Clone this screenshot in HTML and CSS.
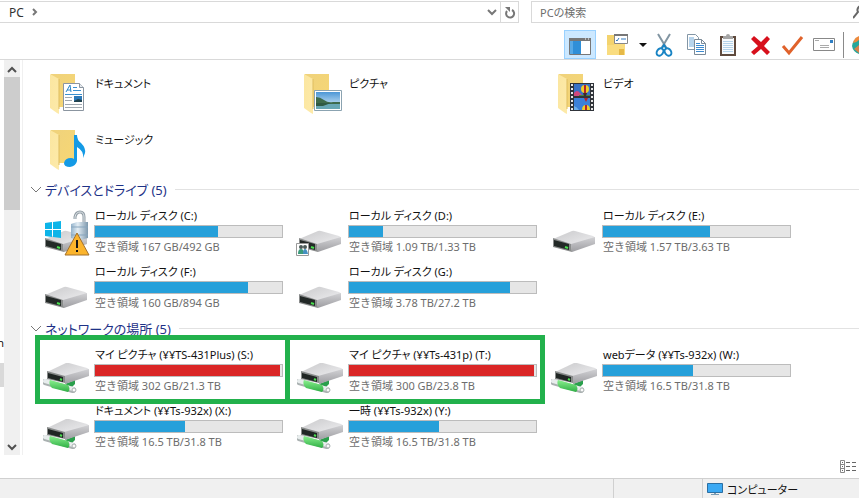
FILE: index.html
```html
<!DOCTYPE html>
<html lang="ja">
<head>
  <meta charset="UTF-8">
  <meta name="viewport" content="width=device-width, initial-scale=1.0">
  <title>PC</title>
  <link rel="stylesheet" href="styles.css">
</head>
<body>
  <!-- Shared icons -->
  <svg class="defs" aria-hidden="true">
    <defs>
      <linearGradient id="folderBack" x1="0" y1="0" x2="1" y2="1">
        <stop offset="0" stop-color="#efd27c"/><stop offset="1" stop-color="#f7d774"/>
      </linearGradient>
      <linearGradient id="folderFlap" x1="0" y1="0" x2="1" y2="1">
        <stop offset="0" stop-color="#fbe6a0"/><stop offset="1" stop-color="#fdeaa9"/>
      </linearGradient>
      <linearGradient id="driveTop" x1="0" y1="0" x2="1" y2="1">
        <stop offset="0" stop-color="#c9c9cb"/><stop offset="1" stop-color="#efeff1"/>
      </linearGradient>
      <linearGradient id="driveSide" x1="0" y1="0" x2="0" y2="1">
        <stop offset="0" stop-color="#d2d2d5"/><stop offset="1" stop-color="#9d9da1"/>
      </linearGradient>
      <linearGradient id="pipe" x1="0" y1="0" x2="0" y2="1">
        <stop offset="0" stop-color="#8af08e"/><stop offset="1" stop-color="#2fae45"/>
      </linearGradient>
      <linearGradient id="sky" x1="0" y1="0" x2="0" y2="1">
        <stop offset="0" stop-color="#4c97d6"/><stop offset="1" stop-color="#e4f3fb"/>
      </linearGradient>
      <linearGradient id="lockBody" x1="0" y1="0" x2="1" y2="0">
        <stop offset="0" stop-color="#93b3cc"/><stop offset=".4" stop-color="#e3edf4"/><stop offset="1" stop-color="#7d98ad"/>
      </linearGradient>
    </defs>
    <symbol id="folder" viewBox="0 0 51 56">
      <path d="M8 10h24v33H9z" fill="url(#folderBack)"/>
      <path d="M7 10l9 5v35l-2-1-7-5z" fill="url(#folderFlap)"/>
      <path d="M16 15v30" stroke="#dfbd5e" stroke-width="1"/>
    </symbol>
    <symbol id="drive" viewBox="0 0 51 56">
      <path d="M2 36l19-8q1-.5 3 0l18 5q2 1 2 2L23 43z" fill="url(#driveTop)"/>
      <path d="M20 41l24-7v7l-23 8z" fill="url(#driveSide)"/>
      <path d="M2 35l18 6 1 8L2 44z" fill="#8a8c8c"/>
      <path d="M3 37l15 4v6L3 43z" fill="#232927"/>
      <path d="M14 44l3 1" stroke="#49e04f" stroke-width="2"/>
    </symbol>
    <symbol id="netdrive" viewBox="0 0 51 56">
      <path d="M22 42l10-4v4l-4 4z" fill="#2a9f4c"/>
      <path d="M2 40l28 8" stroke="#aab1b1" stroke-width="6" stroke-linecap="round"/>
      <path d="M2 39l28 8" stroke="#e8eded" stroke-width="4" stroke-linecap="round"/>
      <path d="M7 38l18 5q3 4 0 7L9 46q-4-4-2-8z" fill="url(#pipe)"/>
      <circle cx="31" cy="48" r="2" fill="#fafafa" stroke="#aab1b1"/>
      <path d="M4 30l19-9h3l18 5q2 1 2 2L24 35z" fill="url(#driveTop)"/>
      <path d="M21 34l25-7v7l-24 8z" fill="url(#driveSide)"/>
      <path d="M4 29l18 5v7L4 37z" fill="#888b8a"/>
      <path d="M5 31l15 4v5L5 36z" fill="#202624"/>
      <path d="M17 37l2 1" stroke="#49e04f" stroke-width="2"/>
    </symbol>
  </svg>

  <header class="nav">
    <div class="address">
      <button type="button" class="crumb">PC
        <svg width="6" height="8" viewBox="0 0 6 8"><path d="M1 1l3 3-3 3" fill="none" stroke="#777" stroke-width="2"/></svg>
      </button>
      <button type="button" class="history" aria-label="履歴">
        <svg width="10" height="7" viewBox="0 0 10 7"><path d="M1 1l4 4 4-4" fill="none" stroke="#777" stroke-width="2"/></svg>
      </button>
      <button type="button" class="refresh" aria-label="更新">
        <svg width="12" height="13" viewBox="0 0 12 13"><path d="M8 4a4 4 0 1 1-5 1" fill="none" stroke="#777" stroke-width="2"/><path d="M1 1h5v5z" fill="#777"/></svg>
      </button>
    </div>
    <div class="search">
      <input type="text" placeholder="PCの検索" aria-label="PCの検索">
      <svg width="6" height="14" viewBox="0 0 6 14"><path d="M8 1a4 4 0 0 0-3 6L0 13" fill="none" stroke="#666" stroke-width="2"/></svg>
    </div>
  </header>

  <div class="toolbar">
    <button type="button" class="tool active" aria-label="ナビゲーション">
      <svg width="24" height="24" viewBox="0 0 24 24"><path d="M1.500 5.500h21v16h-21z" fill="#fff" stroke="#777"/><path d="M1 5h22v3H1z" fill="#777"/><path d="M2 8h11v13H2z" fill="#2f8fd8"/><path d="M17 6h1M20 6h1" stroke="#fff"/><path d="M2 8h3v13H2z" fill="#57a9e6"/></svg>
    </button>
    <button type="button" class="tool folder-tool" aria-label="オプション">
      <svg width="24" height="24" viewBox="0 0 24 24"><path d="M2 2h7l2 9h9v11H2z" fill="#f3d36e"/><path d="M2 12h7l2-3h9v13H2z" fill="#f9dc7f"/><path d="M14 16h5v6h-5z" fill="#e6b948"/><path d="M9.500 1.500h13v9h-13z" fill="#fff" stroke="#888"/><path d="M9 2h14" stroke="#777" stroke-width="2"/><path d="M11 7l1 1 2-3M16 6h5" fill="none" stroke="#3179bd"/></svg>
    </button>
    <button type="button" class="tool drop" aria-label="メニュー">
      <svg width="8" height="4" viewBox="0 0 8 4"><path d="M0 0h8L4 4z" fill="#111"/></svg>
    </button>
    <button type="button" class="tool" aria-label="切り取り">
      <svg width="24" height="24" viewBox="0 0 24 24"><path d="M6 1l9 15M18 1L9 16" stroke="#8295a2" stroke-width="2"/><ellipse cx="8" cy="19" rx="3" ry="4" transform="rotate(35 8 19)" fill="none" stroke="#1984c4" stroke-width="2"/><ellipse cx="16" cy="19" rx="3" ry="4" transform="rotate(-35 16 19)" fill="none" stroke="#1984c4" stroke-width="2"/><path d="M10 15l2-3 2 3" fill="none" stroke="#1984c4" stroke-width="2"/></svg>
    </button>
    <button type="button" class="tool" aria-label="コピー">
      <svg width="24" height="24" viewBox="0 0 24 24"><path d="M3.500 1.500h8l3 3v12h-11z" fill="#fff" stroke="#8396a6"/><path d="M5 5h5M5 7h5M5 9h5M5 11h5M5 13h5" stroke="#6fa9da"/><path d="M10.500 6.500h7l4 4v11h-11z" fill="#fff" stroke="#7b8b99"/><path d="M17.500 6.500v4h4" fill="none" stroke="#7b8b99"/><path d="M12 10.500h4M12 12.500h8M12 14.500h8M12 16.500h8M12 18.500h8" stroke="#3d8bd0"/></svg>
    </button>
    <button type="button" class="tool" aria-label="貼り付け">
      <svg width="24" height="24" viewBox="0 0 24 24"><path d="M4 3h16v20H4z" fill="#5f4a3d"/><path d="M6 5h12v16H6z" fill="#f7fafc"/><path d="M7 8.500h10M7 10.500h10M7 12.500h10M7 14.500h10M7 16.500h10M7 18.500h10" stroke="#b5d3ea"/><path d="M7 3h3q0-2 2-2t2 2h3v3H7z" fill="#a5a5a5"/></svg>
    </button>
    <button type="button" class="tool" aria-label="削除">
      <svg width="24" height="24" viewBox="0 0 24 24"><path d="M6 3l7 6 6-6 3 3-6 7 6 6-3 3-6-6-7 6-3-3 7-6-7-7z" fill="#d7101c"/></svg>
    </button>
    <button type="button" class="tool" aria-label="名前の変更">
      <svg width="24" height="24" viewBox="0 0 24 24"><path d="M3 13l6 7L22 4" fill="none" stroke="#e0622b" stroke-width="3"/></svg>
    </button>
    <button type="button" class="tool" aria-label="プロパティ">
      <svg width="24" height="24" viewBox="0 0 24 24"><path d="M1.500 5.500h21v12h-21z" fill="#fff" stroke="#888"/><path d="M3 7.500h4M8 12.500h9M8 14.500h9" stroke="#aaa"/><path d="M18 7h3v3h-3z" fill="#2f7fc4"/></svg>
    </button>
    <span class="separator"></span>
    <button type="button" class="tool shell" aria-label="シェル">
      <svg width="7" height="24" viewBox="0 0 7 24"><path d="M7 4Q1 6 0 13q1 6 7 8z" fill="#26a79b"/><path d="M7 3Q2 5 1 10q3 0 6-3z" fill="#ef8a3c"/><path d="M2 16l5-4v8z" fill="#d9814b"/></svg>
    </button>
  </div>

  <div class="main">
    <div class="tree"><span class="tree-text">n</span><span class="tree-block"></span></div>
    <div class="scrollbar">
      <button type="button" aria-label="上へ"><svg width="10" height="7" viewBox="0 0 10 7"><path d="M1 6l4-4 4 4" fill="none" stroke="#505050" stroke-width="2"/></svg></button>
      <div class="thumb"></div>
      <button type="button" aria-label="下へ"><svg width="10" height="7" viewBox="0 0 10 7"><path d="M1 1l4 4 4-4" fill="none" stroke="#505050" stroke-width="2"/></svg></button>
    </div>

    <main class="content">
      <!-- Folders -->
      <ul class="items folders">
        <li class="item">
          <svg class="icon" viewBox="0 0 51 56"><use href="#folder"/><path d="M20.500 19.500h16l4 4v23h-20z" fill="#fff" stroke="#8b95a0"/><path d="M36.500 19.500v4h4" fill="#e6eaee" stroke="#8b95a0"/><path d="M23 28l4-7 1 7M24 26h4" fill="none" stroke="#2a86c8"/><path d="M30 23.500h4M30 26.500h8M22 30.500h17" stroke="#3a90cf"/><path d="M22 33.500h7M22 36.500h7M22 40.500h17M22 43.500h17" stroke="#a0a8b0"/><path d="M31 32h8v6h-8z" fill="#2b79b8"/><path d="M31 37l4-2 4 1v2h-8z" fill="#20424f"/></svg>
          <div class="info"><p class="name">ドキュメント</p></div>
        </li>
        <li class="item">
          <svg class="icon" viewBox="0 0 51 56"><use href="#folder"/><path d="M17.500 26.500h27v20h-27z" fill="#fff" stroke="#8ba3b1"/><path d="M19 28h24v17H19z" fill="url(#sky)"/><path d="M19 33q4 0 8 3t9 2h7v2H19z" fill="#3e6b4c"/><path d="M19 40h24v5H19z" fill="#67a7b4"/><path d="M19 39h15l-8 3h-7z" fill="#2f5a43"/></svg>
          <div class="info"><p class="name">ピクチャ</p></div>
        </li>
        <li class="item">
          <svg class="icon" viewBox="0 0 51 56"><use href="#folder"/><path d="M19 19h24v28H19z" fill="#30343a"/><path d="M21 20v27M41 20v27" stroke="#e8e8e8" stroke-width="2" stroke-dasharray="2 2"/><path d="M23 20h16v12H23z" fill="#3972c5"/><path d="M23 34h16v12H23z" fill="#3b80d8"/><path d="M23 29q3-4 6 0l3 3h-9z" fill="#d0477d"/><path d="M28 31h11v1H28z" fill="#49843c"/><circle cx="34" cy="25" r="4" fill="#f1cd26"/><path d="M34 21v8" stroke="#b3232c" stroke-width="2"/><path d="M32 29h4l-1 3h-2z" fill="#402b25"/><path d="M33 34h4l-2 4z" fill="#b3232c"/><path d="M31 46q0-5 4-5t4 5z" fill="#f1cd26"/><path d="M35 41v5" stroke="#b3232c" stroke-width="2"/><path d="M23 42q3 1 5 4h-5z" fill="#6caee9"/></svg>
          <div class="info"><p class="name">ビデオ</p></div>
        </li>
        <li class="item">
          <svg class="icon" viewBox="0 0 51 56"><use href="#folder"/><path d="M31 15h3q0 5 4 8 5 5 4 10l-2 5q1-7-6-11v14q-1 5-7 6-6 0-6-4 1-5 7-5 2 0 3 1z" fill="#149ae5"/></svg>
          <div class="info"><p class="name">ミュージック</p></div>
        </li>
      </ul>

      <!-- Devices and drives -->
      <h2 class="group"><button type="button"><svg width="12" height="7" viewBox="0 0 12 7"><path d="M1 1l5 5 5-5" fill="none" stroke="#777"/></svg>デバイスとドライブ (5)</button></h2>
      <ul class="items">
        <li class="item">
          <svg class="icon" viewBox="0 0 51 56"><use href="#drive"/><path d="M2 20l7-1v7H2zM10 19l8-1v8h-8zM2 27h7v7l-7-1zM10 27h8v8l-8-1z" fill="#0db4e8"/><path d="M41 21v-7q0-5-4-5t-5 5v2" fill="none" stroke="#929da5" stroke-width="3"/><path d="M41 21v-7q0-5-4-5t-5 5v2" fill="none" stroke="#dfe5e9"/><path d="M28 21l6-2h11v16l-8 2-9-2z" fill="url(#lockBody)"/><path d="M28 24h17M28 32h17" stroke="#87a5bd"/><path d="M34 30l12 22H22z" fill="#fbb42c" stroke="#a3702b" stroke-linejoin="round"/><path d="M34 37v8M34 47v2" stroke="#161616" stroke-width="2"/></svg>
          <div class="info"><p class="name">ローカル ディスク (C:)</p><div class="bar"><div class="fill" style="width:66%"></div></div><p class="free">空き領域 167 GB/492 GB</p></div>
        </li>
        <li class="item">
          <svg class="icon" viewBox="0 0 51 56"><use href="#drive"/><path d="M-.5 40.500h12v12h-12z" fill="#fff" stroke="#999"/><circle cx="4" cy="44" r="2" fill="#4c5a58"/><circle cx="8" cy="44" r="2" fill="#4c5a58"/><path d="M1 51q0-5 3-5t3 5z" fill="#3b9a7b"/><path d="M6 51q0-5 2-5t3 5z" fill="#4590c1"/></svg>
          <div class="info"><p class="name">ローカル ディスク (D:)</p><div class="bar"><div class="fill" style="width:18%"></div></div><p class="free">空き領域 1.09 TB/1.33 TB</p></div>
        </li>
        <li class="item">
          <svg class="icon" viewBox="0 0 51 56"><use href="#drive"/></svg>
          <div class="info"><p class="name">ローカル ディスク (E:)</p><div class="bar"><div class="fill" style="width:57%"></div></div><p class="free">空き領域 1.57 TB/3.63 TB</p></div>
        </li>
        <li class="item">
          <svg class="icon" viewBox="0 0 51 56"><use href="#drive"/></svg>
          <div class="info"><p class="name">ローカル ディスク (F:)</p><div class="bar"><div class="fill" style="width:82%"></div></div><p class="free">空き領域 160 GB/894 GB</p></div>
        </li>
        <li class="item">
          <svg class="icon" viewBox="0 0 51 56"><use href="#drive"/></svg>
          <div class="info"><p class="name">ローカル ディスク (G:)</p><div class="bar"><div class="fill" style="width:86%"></div></div><p class="free">空き領域 3.78 TB/27.2 TB</p></div>
        </li>
      </ul>

      <!-- Network locations -->
      <h2 class="group"><button type="button"><svg width="12" height="7" viewBox="0 0 12 7"><path d="M1 1l5 5 5-5" fill="none" stroke="#777"/></svg>ネットワークの場所 (5)</button></h2>
      <ul class="items">
        <li class="item marked">
          <svg class="icon" viewBox="0 0 51 56"><use href="#netdrive"/></svg>
          <div class="info"><p class="name">マイ ピクチャ (¥¥TS-431Plus) (S:)</p><div class="bar"><div class="fill full" style="width:99%"></div></div><p class="free">空き領域 302 GB/21.3 TB</p></div>
        </li>
        <li class="item marked-next">
          <svg class="icon" viewBox="0 0 51 56"><use href="#netdrive"/></svg>
          <div class="info"><p class="name">マイ ピクチャ (¥¥Ts-431p) (T:)</p><div class="bar"><div class="fill full" style="width:99%"></div></div><p class="free">空き領域 300 GB/23.8 TB</p></div>
        </li>
        <li class="item">
          <svg class="icon" viewBox="0 0 51 56"><use href="#netdrive"/></svg>
          <div class="info"><p class="name">webデータ (¥¥Ts-932x) (W:)</p><div class="bar"><div class="fill" style="width:48%"></div></div><p class="free">空き領域 16.5 TB/31.8 TB</p></div>
        </li>
        <li class="item">
          <svg class="icon" viewBox="0 0 51 56"><use href="#netdrive"/></svg>
          <div class="info"><p class="name">ドキュメント (¥¥Ts-932x) (X:)</p><div class="bar"><div class="fill" style="width:48%"></div></div><p class="free">空き領域 16.5 TB/31.8 TB</p></div>
        </li>
        <li class="item">
          <svg class="icon" viewBox="0 0 51 56"><use href="#netdrive"/></svg>
          <div class="info"><p class="name">一時 (¥¥Ts-932x) (Y:)</p><div class="bar"><div class="fill" style="width:48%"></div></div><p class="free">空き領域 16.5 TB/31.8 TB</p></div>
        </li>
      </ul>
    </main>
  </div>

  <div class="views">
    <button type="button" aria-label="詳細表示">
      <svg width="17" height="14" viewBox="0 0 17 14"><path d="M.5.500h4v12h-4zM.5 4.500h4M.5 8.500h4" fill="none" stroke="#888"/><path d="M2 2.500h1M2 6.500h1M2 10.500h1M6 2.500h4M12 2.500h4M6 6.500h4M12 6.500h4M6 10.500h4M12 10.500h4" stroke="#666"/></svg>
    </button>
  </div>

  <footer class="status">
    <span class="cell"></span>
    <span class="cell zone">
      <svg width="16" height="14" viewBox="0 0 16 14"><path d="M.5 1.500h15v9H.5z" fill="#3ba9f3" stroke="#2b6fa3"/><path d="M7 11h2v1h3v1H4v-1h3z" fill="#7a9db5"/></svg>
      コンピューター
    </span>
  </footer>
</body>
</html>
```
FILE: styles.css
```css
*, *::before, *::after {
  margin: 0;
  padding: 0;
  box-sizing: border-box;
}

body {
  display: flex;
  flex-direction: column;
  height: 100vh;
  overflow: hidden;
  background: #fff;
  color: #111;
  font-family: "Noto Sans", "Noto Sans CJK JP", sans-serif;
  font-feature-settings: "palt";
  font-size: 11px;
}

button, input {
  border: none;
  background: none;
  color: inherit;
  font: inherit;
  font-feature-settings: inherit;
}

ul {
  list-style: none;
}

.defs {
  position: absolute;
  width: 0;
  height: 0;
}

/* Address bar */
.nav {
  display: flex;
  gap: 12px;
  height: 23px;
  padding-top: 1px;
}

.address {
  display: flex;
  flex: 1;
  border: 1px solid #d9d9d9;
  border-left: none;
}

.address button {
  display: flex;
  align-items: center;
  justify-content: center;
}

.address .crumb {
  gap: 8px;
  padding-left: 9px;
  color: #333;
  font-size: 12px;
}

.address .history {
  width: 16px;
  margin-left: auto;
}

.address .refresh {
  width: 18px;
  border-left: 1px solid #d9d9d9;
}

.search {
  display: flex;
  align-items: center;
  width: 328px;
  border: 1px solid #d9d9d9;
  border-right: none;
}

.search input {
  flex: 1;
  min-width: 0;
  padding-left: 8px;
}

.search input::placeholder {
  color: #6d6d6d;
}

/* Toolbar */
.toolbar {
  display: flex;
  justify-content: flex-end;
  align-items: flex-end;
  height: 37px;
  border-bottom: 1px solid #d9d9d9;
}

.tool {
  display: flex;
  align-items: center;
  justify-content: center;
  width: 32px;
  height: 29px;
}

.tool.active {
  background: #cce8ff;
  border: 1px solid #99d1ff;
}

.folder-tool {
  width: 42px;
}

.drop {
  width: 10px;
}

.separator {
  width: 1px;
  height: 26px;
  margin: 0 4px 1px 3px;
  background: #8a8a8a;
}

.shell {
  justify-content: flex-end;
  width: 11px;
}

/* Main area */
.main {
  display: flex;
  flex: 1;
  min-height: 0;
}

.tree {
  display: flex;
  flex-direction: column;
  justify-content: flex-end;
  align-items: flex-end;
  width: 4px;
  padding-bottom: 68px;
  overflow: hidden;
}

.tree-text {
  line-height: 16px;
  margin-bottom: 12px;
}

.tree-block {
  width: 4px;
  height: 24px;
  background: #d9d9d9;
}

.scrollbar {
  display: flex;
  flex-direction: column;
  width: 16px;
  background: #f0f0f0;
}

.scrollbar button {
  height: 17px;
}

.thumb {
  height: 133px;
  margin-bottom: auto;
  background: #cdcdcd;
}

.content {
  flex: 1;
  min-width: 0;
  margin-left: 2px;
  padding-top: 4px;
  border-left: 1px solid #f0f0f0;
  overflow: hidden;
}

.items {
  display: grid;
  grid-template-columns: repeat(auto-fill, 254px);
  padding-left: 20px;
}

.item {
  position: relative;
  display: flex;
  height: 56px;
}

.icon {
  width: 51px;
  height: 56px;
  overflow: visible;
}

.info {
  width: 189px;
  padding-top: 4px;
}

.folders .info {
  padding-top: 11px;
}

.name {
  padding-left: 1px;
  line-height: 18px;
  white-space: nowrap;
}

.bar {
  height: 13px;
  border: 1px solid #bcbcbc;
  background: #e6e6e6;
}

.fill {
  height: 100%;
  background: #26a0da;
}

.fill.full {
  background: #da2626;
}

.free {
  padding-left: 1px;
  color: #6d6d6d;
  font-feature-settings: normal;
  line-height: 18px;
}

.group {
  display: flex;
  align-items: center;
  gap: 8px;
  height: 27px;
  padding-left: 7px;
  color: #1e3287;
  font-size: 13px;
  font-weight: normal;
}

.group button {
  display: flex;
  align-items: center;
  gap: 3px;
}

.group::after {
  content: "";
  flex: 1;
  height: 1px;
  background: #e2e2e2;
}

/* Frame around the two full drives */
.marked::after {
  content: "";
  position: absolute;
  top: -7px;
  left: -8px;
  width: 510px;
  height: 69px;
  border: 5px solid #22b14c;
}

.marked-next::before {
  content: "";
  position: absolute;
  top: -7px;
  left: -12px;
  width: 5px;
  height: 69px;
  background: #22b14c;
}

/* Bottom */
.views {
  display: flex;
  justify-content: flex-end;
  height: 23px;
  padding: 3px 2px 0 0;
}

.status {
  display: flex;
  justify-content: flex-end;
  height: 20px;
  border-top: 1px solid #d0d0d0;
  background: #f0f0f0;
}

.cell {
  width: 89px;
  border-left: 1px solid #d0d0d0;
}

.zone {
  display: flex;
  align-items: center;
  gap: 4px;
  width: 157px;
  padding-left: 4px;
}
```
